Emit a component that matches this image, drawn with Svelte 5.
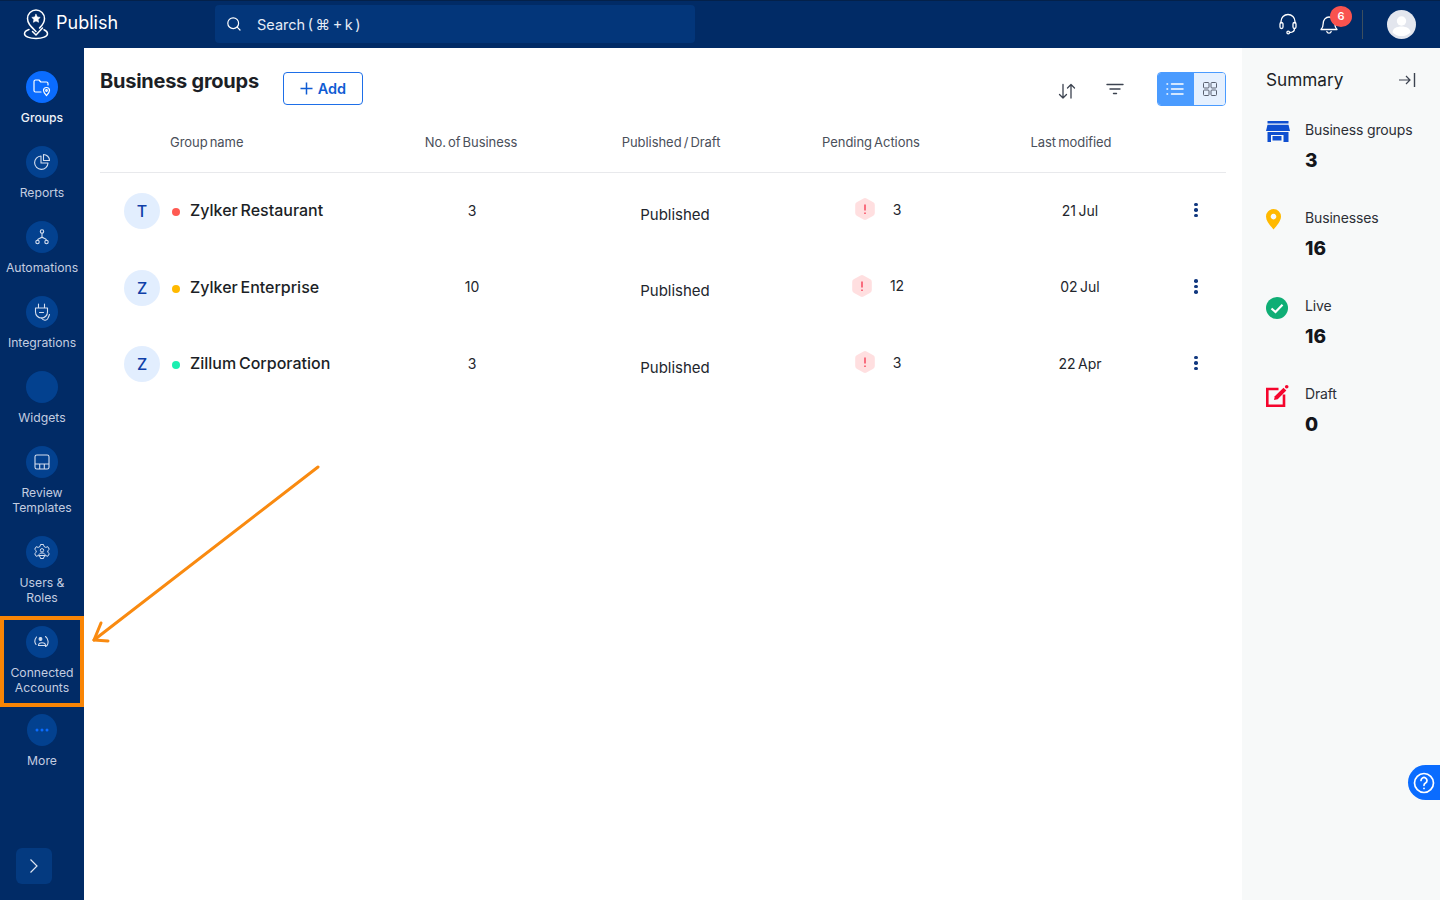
<script>
  const nav = [
    { id: 'groups', label: ['Groups'], active: true },
    { id: 'reports', label: ['Reports'] },
    { id: 'automations', label: ['Automations'] },
    { id: 'integrations', label: ['Integrations'] },
    { id: 'widgets', label: ['Widgets'] },
    { id: 'templates', label: ['Review', 'Templates'] },
    { id: 'users', label: ['Users &', 'Roles'] },
    { id: 'connected', label: ['Connected', 'Accounts'], marked: true },
    { id: 'more', label: ['More'] }
  ]

  const rows = [
    { initial: 'T', name: 'Zylker Restaurant', status: '#ff5a52', count: 3, state: 'Published', pending: 3, date: '21 Jul' },
    { initial: 'Z', name: 'Zylker Enterprise', status: '#ffb900', count: 10, state: 'Published', pending: 12, date: '02 Jul' },
    { initial: 'Z', name: 'Zillum Corporation', status: '#1cefb1', count: 3, state: 'Published', pending: 3, date: '22 Apr' }
  ]

  const summary = [
    { id: 'store', label: 'Business groups', value: 3 },
    { id: 'pin', label: 'Businesses', value: 16 },
    { id: 'live', label: 'Live', value: 16 },
    { id: 'draft', label: 'Draft', value: 0 }
  ]
</script>

<div class="page">
  <header class="topbar">
    <div class="brand">
      <svg width="26" height="32" viewBox="0 0 26 32" fill="none" stroke="#fff" stroke-width="1.500" stroke-linecap="round" stroke-linejoin="round">
        <path d="M13 23.500 C8 18.500 4.500 15.500 4.500 10.500 a8.500 8.500 0 0 1 17 0 C21.500 15.500 18 18.500 16.500 20" />
        <path d="M13 6.300 l1.300 2.700 2.900 .4 -2.100 2 .5 2.900 -2.600 -1.400 -2.600 1.400 .5 -2.900 -2.100 -2 2.900 -.4z" fill="#fff" stroke-width="0.600" />
        <path d="M6 21.500 C3 22.500 1.500 24 1.500 25.700 C1.500 28.500 6.500 30.500 13 30.500 S24.500 28.500 24.500 25.700 C24.500 24 23 22.700 21 21.800" />
        <path d="M9.500 23.500 l3.500 3.500 6.500 -7" />
      </svg>
      <span class="brand-name">Publish</span>
    </div>
    <div class="search">
      <svg width="16" height="16" viewBox="0 0 16 16" fill="none" stroke="#fff" stroke-width="1.200" stroke-linecap="round">
        <circle cx="7.200" cy="7.200" r="5.400" />
        <path d="M11.200 11.200 L14 14" />
      </svg>
      <span>Search ( ⌘ + k )</span>
    </div>
    <div class="top-actions">
      <svg class="headset" width="20" height="22" viewBox="0 0 20 22" fill="none" stroke="#fff" stroke-width="1.300" stroke-linecap="round">
        <path d="M3 10 V8.500 a7 7 0 0 1 14 0 V10" />
        <rect x="2" y="9.500" width="3" height="6" rx="1.500" />
        <rect x="15" y="9.500" width="3" height="6" rx="1.500" />
        <path d="M16.500 15.500 c0 3 -2 4 -5 4" />
        <circle cx="10.200" cy="19.500" r="1.300" />
      </svg>
      <div class="bell">
        <svg width="20" height="22" viewBox="0 0 20 22" fill="none" stroke="#fff" stroke-width="1.300" stroke-linecap="round" stroke-linejoin="round">
          <path d="M2 16.500 h16 c-1.500 -1.500 -2.200 -3 -2.200 -6 c0 -3.500 -2.500 -6.500 -5.800 -6.500 s-5.800 3 -5.800 6.500 c0 3 -.7 4.500 -2.200 6z" />
          <path d="M7.800 18.500 a2.300 2.300 0 0 0 4.400 0" />
        </svg>
        <span class="badge">6</span>
      </div>
      <span class="divider"></span>
      <div class="me">
        <svg width="29" height="29" viewBox="0 0 29 29">
          <circle cx="14.500" cy="14.500" r="14.500" fill="#e3e6ee" />
          <circle cx="14.500" cy="11" r="4.700" fill="#fff" />
          <path d="M5.500 22.500 c0 -4 4 -6 9 -6 s9 2 9 6 a13 13 0 0 1 -18 0z" fill="#fff" />
        </svg>
      </div>
    </div>
  </header>

  <div class="body">
    <aside class="sidebar">
      {#each nav as item (item.id)}
        <div class="nav-item" class:active={item.active} class:marked={item.marked} class:more={item.id === 'more'}>
          <div class="nav-icon">
            {#if item.id === 'groups'}
              <svg width="20" height="20" viewBox="0 0 20 20" fill="none" stroke="#fff" stroke-width="1.200" stroke-linecap="round" stroke-linejoin="round">
                <path d="M9 15 H3.500 a1.500 1.500 0 0 1 -1.500 -1.500 V4.500 A1.500 1.500 0 0 1 3.500 3 H7 l1.800 2 h5.700 a1.500 1.500 0 0 1 1.500 1.500 V8" />
                <path d="M14.500 18.500 c-1.700 -1.900 -3 -3.200 -3 -5 a3 3 0 0 1 6 0 c0 1.800 -1.300 3.100 -3 5z" />
                <circle cx="14.500" cy="13.500" r="0.800" />
              </svg>
            {:else if item.id === 'reports'}
              <svg width="18" height="18" viewBox="0 0 18 18" fill="none" stroke="#d5deee" stroke-width="1.100" stroke-linejoin="round">
                <path d="M8 3 a6.700 6.700 0 1 0 7 7 H8z" />
                <path d="M10.500 1.500 a6 6 0 0 1 6 6 h-6z" />
              </svg>
            {:else if item.id === 'automations'}
              <svg width="18" height="18" viewBox="0 0 18 18" fill="none" stroke="#d5deee" stroke-width="1.100" stroke-linecap="round">
                <circle cx="9" cy="3.500" r="1.700" />
                <circle cx="4.500" cy="14" r="1.700" />
                <circle cx="13.500" cy="14" r="1.700" />
                <path d="M9 5.200 V9 M4.500 12.300 C4.800 10 7.500 10.500 9 9 C10.500 10.500 13.200 10 13.500 12.300" />
              </svg>
            {:else if item.id === 'integrations'}
              <svg width="20" height="20" viewBox="0 0 20 20" fill="none" stroke="#d5deee" stroke-width="1.100" stroke-linecap="round" stroke-linejoin="round">
                <path d="M6.500 2 V6 M12.500 2 V6 M3.500 6 H15.500 V10 a6 6 0 0 1 -12 0z" />
                <path d="M7.500 10.500 H11.500" />
                <path d="M9.500 16 c2 3 5 2.500 6 1 c.8 -1.300 1.500 -3 2 -4.500" />
              </svg>
            {:else if item.id === 'templates'}
              <svg width="18" height="18" viewBox="0 0 18 18" fill="none" stroke="#d5deee" stroke-width="1.100" stroke-linejoin="round">
                <rect x="2" y="2" width="14" height="14" rx="1.800" />
                <path d="M2 11 H16 M6.700 11 V16 M11.300 11 V16" />
              </svg>
            {:else if item.id === 'users'}
              <svg width="18" height="18" viewBox="0 0 18 18" fill="none" stroke="#d5deee" stroke-width="1" stroke-linejoin="round">
                <path d="M7.500 1.500 h3 l.5 2 1.800 .9 2 -.7 1.500 2.600 -1.500 1.400 v1.600 l1.500 1.400 -1.500 2.600 -2 -.7 -1.800 .9 -.5 2 h-3 l-.5 -2 -1.800 -.9 -2 .7 -1.500 -2.600 1.500 -1.400 v-1.600 l-1.500 -1.400 1.500 -2.600 2 .7 1.800 -.9z" />
                <circle cx="9" cy="7.300" r="1.700" />
                <path d="M5.800 12.500 c0 -1.700 1.400 -2.500 3.200 -2.500 s3.200 .8 3.200 2.500z" />
              </svg>
            {:else if item.id === 'connected'}
              <svg width="18" height="18" viewBox="0 0 18 18" fill="none" stroke="#d5deee" stroke-width="1.100" stroke-linecap="round">
                <circle cx="7.500" cy="6" r="1.400" fill="#d5deee" />
                <path d="M5.500 12.500 c0 -1.800 1.300 -2.800 3.500 -2.800 s3.500 1 3.500 2.800z" />
                <path d="M3.500 4 C1.500 6.500 1.500 9.500 3 11.500 M12.500 3.500 c3 2.500 3.200 6.500 1.500 9 l-1.500 1" />
              </svg>
            {:else if item.id === 'more'}
              <svg width="14" height="4" viewBox="0 0 14 4" fill="#0a6cff">
                <circle cx="2" cy="2" r="1.500" />
                <circle cx="7" cy="2" r="1.500" />
                <circle cx="12" cy="2" r="1.500" />
              </svg>
            {/if}
          </div>
          <div class="nav-label">
            {#each item.label as line}
              <div>{line}</div>
            {/each}
          </div>
        </div>
      {/each}
      <div class="expand">
        <svg width="10" height="16" viewBox="0 0 10 16" fill="none" stroke="#dfe6f2" stroke-width="1.200">
          <path d="M1.500 1.500 L8 8 L1.500 14.500" />
        </svg>
      </div>
    </aside>

    <main class="content">
      <div class="toolbar">
        <h1>Business groups</h1>
        <button class="add">
          <svg width="13" height="13" viewBox="0 0 13 13" fill="none" stroke="#0f5bd3" stroke-width="1.500">
            <path d="M6.500 .5 V12.500 M.5 6.500 H12.500" />
          </svg>
          Add
        </button>
        <div class="tools">
          <svg class="sort" width="18" height="18" viewBox="0 0 18 18" fill="none" stroke="#3c4350" stroke-width="1.300" stroke-linecap="round" stroke-linejoin="round">
            <path d="M5 2.500 V16 M1.500 12.500 L5 16 L8.500 12.500" />
            <path d="M13 16 V2.500 M9.500 6 L13 2.500 L16.500 6" />
          </svg>
          <svg class="filter" width="18" height="12" viewBox="0 0 18 12" fill="none" stroke="#3c4350" stroke-width="1.400" stroke-linecap="round">
            <path d="M1 1.500 H17 M4 6 H14 M7.500 10.500 H10.500" />
          </svg>
          <div class="view-toggle">
            <div class="seg on">
              <svg width="18" height="14" viewBox="0 0 18 14" fill="none" stroke="#fff" stroke-width="1.500" stroke-linecap="round">
                <path d="M5.500 2 H17 M5.500 7 H17 M5.500 12 H17 M1 2 H1.600 M1 7 H1.600 M1 12 H1.600" />
              </svg>
            </div>
            <div class="seg">
              <svg width="14" height="14" viewBox="0 0 14 14" fill="none" stroke="#5a6170" stroke-width="1">
                <rect x=".5" y=".5" width="5.500" height="5.500" rx="1" />
                <rect x="8" y=".5" width="5.500" height="5.500" rx="1" />
                <rect x=".5" y="8" width="5.500" height="5.500" rx="1" />
                <rect x="8" y="8" width="5.500" height="5.500" rx="1" />
              </svg>
            </div>
          </div>
        </div>
      </div>

      <div class="thead">
        <div>Group name</div>
        <div class="c">No. of Business</div>
        <div class="c">Published / Draft</div>
        <div class="c">Pending Actions</div>
        <div class="c">Last modified</div>
      </div>

      {#each rows as row}
        <div class="row">
          <div class="name-cell">
            <span class="initial">{row.initial}</span>
            <span class="status" style="background: {row.status}"></span>
            <span class="name">{row.name}</span>
          </div>
          <div class="c">{row.count}</div>
          <div class="c published">{row.state}</div>
          <div class="pending">
            <svg width="22" height="24" viewBox="0 0 22 24">
              <path d="M9.500 1.400 a3 3 0 0 1 3 0 l6.800 3.900 a3 3 0 0 1 1.500 2.600 v8.200 a3 3 0 0 1 -1.500 2.600 l-6.800 3.900 a3 3 0 0 1 -3 0 l-6.800 -3.900 a3 3 0 0 1 -1.500 -2.600 v-8.200 a3 3 0 0 1 1.500 -2.600z" fill="#ffdfe0" />
              <path d="M11 7.500 V13.500 M11 15.500 V17" stroke="#f8485e" stroke-width="1.500" />
            </svg>
            <span>{row.pending}</span>
          </div>
          <div class="c">{row.date}</div>
          <div class="kebab"><i></i><i></i><i></i></div>
        </div>
      {/each}
    </main>

    <aside class="summary">
      <div class="summary-head">
        <span>Summary</span>
        <svg class="collapse" width="18" height="16" viewBox="0 0 18 16" fill="none" stroke="#3c4350" stroke-width="1.200">
          <path d="M1 8 H12 M8 4 L12 8 L8 12" />
          <path d="M16.500 1 V15" stroke-width="1.400" />
        </svg>
      </div>
      {#each summary as s (s.id)}
        <div class="stat">
          <div class="stat-icon">
            {#if s.id === 'store'}
              <svg width="24" height="22" viewBox="0 0 24 22" fill="#0f4fd0">
                <rect x="1.500" y="0" width="21" height="2.500" />
                <path d="M1.500 3.800 H22.500 L24 10 H0z" />
                <path fill-rule="evenodd" d="M1.500 11 H22.500 V21 H17.500 V14 H5 V21 H1.500z M6.500 15 H15.500 V19.500 H6.500z" />
              </svg>
            {:else if s.id === 'pin'}
              <svg width="24" height="22" viewBox="0 0 24 22">
                <path fill-rule="evenodd" d="M7.500 0 a7.500 7.500 0 0 1 7.500 7.500 c0 4.500 -4 9 -7.500 13 c-3.500 -4 -7.500 -8.500 -7.500 -13 a7.500 7.500 0 0 1 7.500 -7.500z M7.500 4.800 a2.800 2.800 0 1 0 .01 0z" fill="#ffb900" />
              </svg>
            {:else if s.id === 'live'}
              <svg width="22" height="22" viewBox="0 0 22 22">
                <circle cx="11" cy="11" r="11" fill="#0fae75" />
                <path d="M5.500 11.500 L9.500 15 L16.500 7.800" fill="none" stroke="#fff" stroke-width="2.200" />
              </svg>
            {:else}
              <svg width="24" height="22" viewBox="0 0 24 22" fill="none">
                <path d="M12.500 4 H1.300 V20.700 H18 V9.500" stroke="#f5052d" stroke-width="2.600" />
                <path d="M8 15 L8.800 11.300 L17.500 2.800 L20.300 5.600 L11.700 14.200z" fill="#f5052d" />
                <circle cx="20.700" cy="1.800" r="1.800" fill="#f5052d" />
              </svg>
            {/if}
          </div>
          <div>
            <div class="stat-label">{s.label}</div>
            <div class="stat-value">{s.value}</div>
          </div>
        </div>
      {/each}
      <div class="help">
        <svg width="22" height="22" viewBox="0 0 22 22" fill="none" stroke="#fff" stroke-width="1.700" stroke-linecap="round">
          <circle cx="11" cy="11" r="9.500" />
          <path d="M8 8.500 a3 3 0 1 1 4.500 2.600 c-1 .6 -1.500 1.200 -1.500 2.200" />
          <path d="M11 16.300 V16.400" />
        </svg>
      </div>
    </aside>
  </div>

  <svg class="callout" width="240" height="190" viewBox="0 0 240 190" fill="none" stroke="#f98a10" stroke-width="3" stroke-linecap="round" stroke-linejoin="round">
    <path d="M228 2 L4 175" />
    <path d="M11 158 L4 175 L18 176" />
  </svg>
</div>

<style>
  :global(body) {
    margin: 0;
    font-family: Inter, "Noto Sans", sans-serif;
    color: #1c1f26;
  }

  .page {
    position: relative;
    width: 1440px;
    height: 900px;
    overflow: hidden;
    background: #fff;
  }

  .topbar {
    height: 48px;
    display: flex;
    align-items: center;
    background: #012b66;
    box-shadow: inset 0 1px 0 #04214a;
    color: #fff;
  }

  .brand {
    width: 215px;
    box-sizing: border-box;
    padding-left: 23px;
    display: flex;
    align-items: center;
    gap: 7px;
    font-size: 18px;
  }

  .brand-name {
    padding-bottom: 3px;
  }

  .search {
    width: 480px;
    height: 38px;
    box-sizing: border-box;
    padding-left: 11px;
    display: flex;
    align-items: center;
    gap: 15px;
    background: #03367a;
    border-radius: 4px;
    font-size: 14.500px;
    word-spacing: -1.500px;
    color: #e6ecf6;
  }

  .top-actions {
    margin-left: auto;
    display: flex;
    align-items: center;
    padding-right: 24px;
  }

  .headset {
    margin-right: 21px;
  }

  .bell {
    position: relative;
    display: flex;
    margin-right: 23px;
  }

  .badge {
    position: absolute;
    top: -7px;
    left: 11px;
    width: 22px;
    height: 21px;
    border-radius: 50%;
    background: #f9534f;
    color: #fff;
    font-size: 11px;
    font-weight: 600;
    text-align: center;
    line-height: 21px;
  }

  .divider {
    width: 1px;
    height: 29px;
    background: #3d4f5e;
    margin-right: 24px;
  }

  .me {
    display: flex;
  }

  .body {
    display: flex;
    height: 852px;
  }

  .sidebar {
    width: 84px;
    flex: none;
    box-sizing: border-box;
    padding-top: 23px;
    display: flex;
    flex-direction: column;
    background: #012b66;
  }

  .nav-item {
    position: relative;
    display: flex;
    flex-direction: column;
    align-items: center;
    padding-bottom: 21px;
  }

  .nav-icon {
    width: 32px;
    height: 32px;
    margin-bottom: 7px;
    border-radius: 50%;
    background: #03418f;
    display: flex;
    align-items: center;
    justify-content: center;
  }

  .nav-item.active .nav-icon {
    background: #0a6cff;
  }

  .nav-item.more {
    margin-top: -2px;
  }

  .nav-item.more .nav-icon {
    width: 30px;
    margin-bottom: 7px;
  }

  .nav-item.marked::after {
    content: '';
    position: absolute;
    top: -10px;
    left: 0;
    right: 0;
    bottom: 9px;
    border: 4px solid #f98505;
  }

  .nav-label {
    font-size: 12.200px;
    line-height: 15px;
    text-align: center;
    color: #c3cde0;
    white-space: nowrap;
  }

  .nav-item.active .nav-label {
    color: #eef2f8;
    font-weight: 500;
  }

  .expand {
    margin: auto 0 16px 16px;
    width: 36px;
    height: 36px;
    border-radius: 6px;
    background: #043a80;
    display: flex;
    align-items: center;
    justify-content: center;
  }

  .content {
    flex: 1;
    box-sizing: border-box;
    padding: 24px 16px 0;
    min-width: 0;
  }

  .toolbar {
    display: flex;
    align-items: flex-start;
  }

  h1 {
    margin: -2px 24px 0 0;
    font-size: 20px;
    line-height: 22px;
    font-weight: 700;
    letter-spacing: -0.25px;
    color: #1c1f26;
  }

  .add {
    width: 80px;
    height: 33px;
    padding: 0 0 1px;
    box-sizing: border-box;
    display: flex;
    align-items: center;
    justify-content: center;
    gap: 5px;
    background: #fff;
    border: 1px solid #1e6fe8;
    border-radius: 4px;
    font: 600 14.500px Inter, sans-serif;
    color: #0f5bd3;
  }

  .tools {
    margin-left: auto;
    display: flex;
    align-items: center;
    height: 34px;
  }

  .sort {
    margin: 4px 0 0 0;
  }

  .filter {
    margin: 0 33px 0 30px;
  }

  .view-toggle {
    display: flex;
    width: 69px;
    height: 34px;
    box-sizing: border-box;
    border: 1px solid #4a9bff;
    border-radius: 4px;
    overflow: hidden;
  }

  .seg {
    flex: 1;
    display: flex;
    align-items: center;
    justify-content: center;
    background: #e5f0fe;
  }

  .seg.on {
    flex: none;
    width: 36px;
    padding-right: 2px;
    box-sizing: border-box;
    background: #4a9bff;
  }

  .thead {
    height: 67px;
    box-sizing: border-box;
    padding: 28px 0 0 70px;
    display: grid;
    grid-template-columns: 201px 200px 200px 200px 200px;
    font-size: 13px;
    line-height: 16px;
    letter-spacing: -0.05px;
    word-spacing: -1.500px;
    color: #4a4f5a;
    border-bottom: 1px solid #e8e9ec;
  }

  .c {
    text-align: center;
  }

  .row {
    height: 76.500px;
    box-sizing: border-box;
    padding-left: 24px;
    display: grid;
    grid-template-columns: 248px 200px 206px 199px 206px 26px;
    align-items: center;
    font-size: 14px;
    word-spacing: -1.500px;
    color: #23262d;
  }

  .row .c {
    padding-bottom: 2px;
  }

  .name-cell {
    display: flex;
    align-items: center;
  }

  .initial {
    width: 36px;
    height: 36px;
    border-radius: 50%;
    background: #e2eefe;
    color: #0f3fa8;
    font-size: 16px;
    font-weight: 500;
    display: flex;
    align-items: center;
    justify-content: center;
  }

  .status {
    width: 8px;
    height: 8px;
    border-radius: 50%;
    margin: 2px 10px 0 12px;
  }

  .name {
    padding-bottom: 2px;
    font-size: 16px;
    font-weight: 500;
    color: #1c1f26;
  }

  .row .published {
    font-size: 15px;
    padding: 6px 0 0;
    word-spacing: 0;
  }

  .pending {
    display: flex;
    align-items: center;
    justify-content: center;
    gap: 17px;
    margin-top: -4px;
  }

  .kebab {
    display: flex;
    flex-direction: column;
    align-items: center;
    gap: 2px;
    margin-top: -3px;
  }

  .kebab i {
    width: 3.500px;
    height: 3.500px;
    border-radius: 50%;
    background: #11387f;
  }

  .summary {
    position: relative;
    width: 198px;
    flex: none;
    box-sizing: border-box;
    padding: 19px 24px 0;
    background: #f7f9f9;
  }

  .summary-head {
    display: flex;
    align-items: center;
    justify-content: space-between;
    height: 24px;
    margin-bottom: 29px;
    font-size: 17.200px;
    color: #1c1f26;
  }

  .collapse {
    margin: 2px 0 0;
  }

  .stat {
    display: flex;
    height: 88px;
    white-space: nowrap;
  }

  .stat-icon {
    width: 39px;
    flex: none;
    padding-top: 1px;
  }

  .stat-label {
    font-size: 14px;
    line-height: 20px;
    letter-spacing: -0.15px;
    color: #2c2f36;
  }

  .stat-value {
    margin-top: 9px;
    font-size: 19px;
    line-height: 24px;
    font-weight: 800;
    color: #14161b;
  }

  .help {
    position: absolute;
    top: 717px;
    right: 0;
    width: 32px;
    height: 35px;
    border-radius: 18px 0 0 18px;
    background: #0a6cff;
    display: flex;
    align-items: center;
    padding-left: 5px;
    box-sizing: border-box;
  }

  .callout {
    position: absolute;
    left: 90px;
    top: 465px;
  }
</style>
